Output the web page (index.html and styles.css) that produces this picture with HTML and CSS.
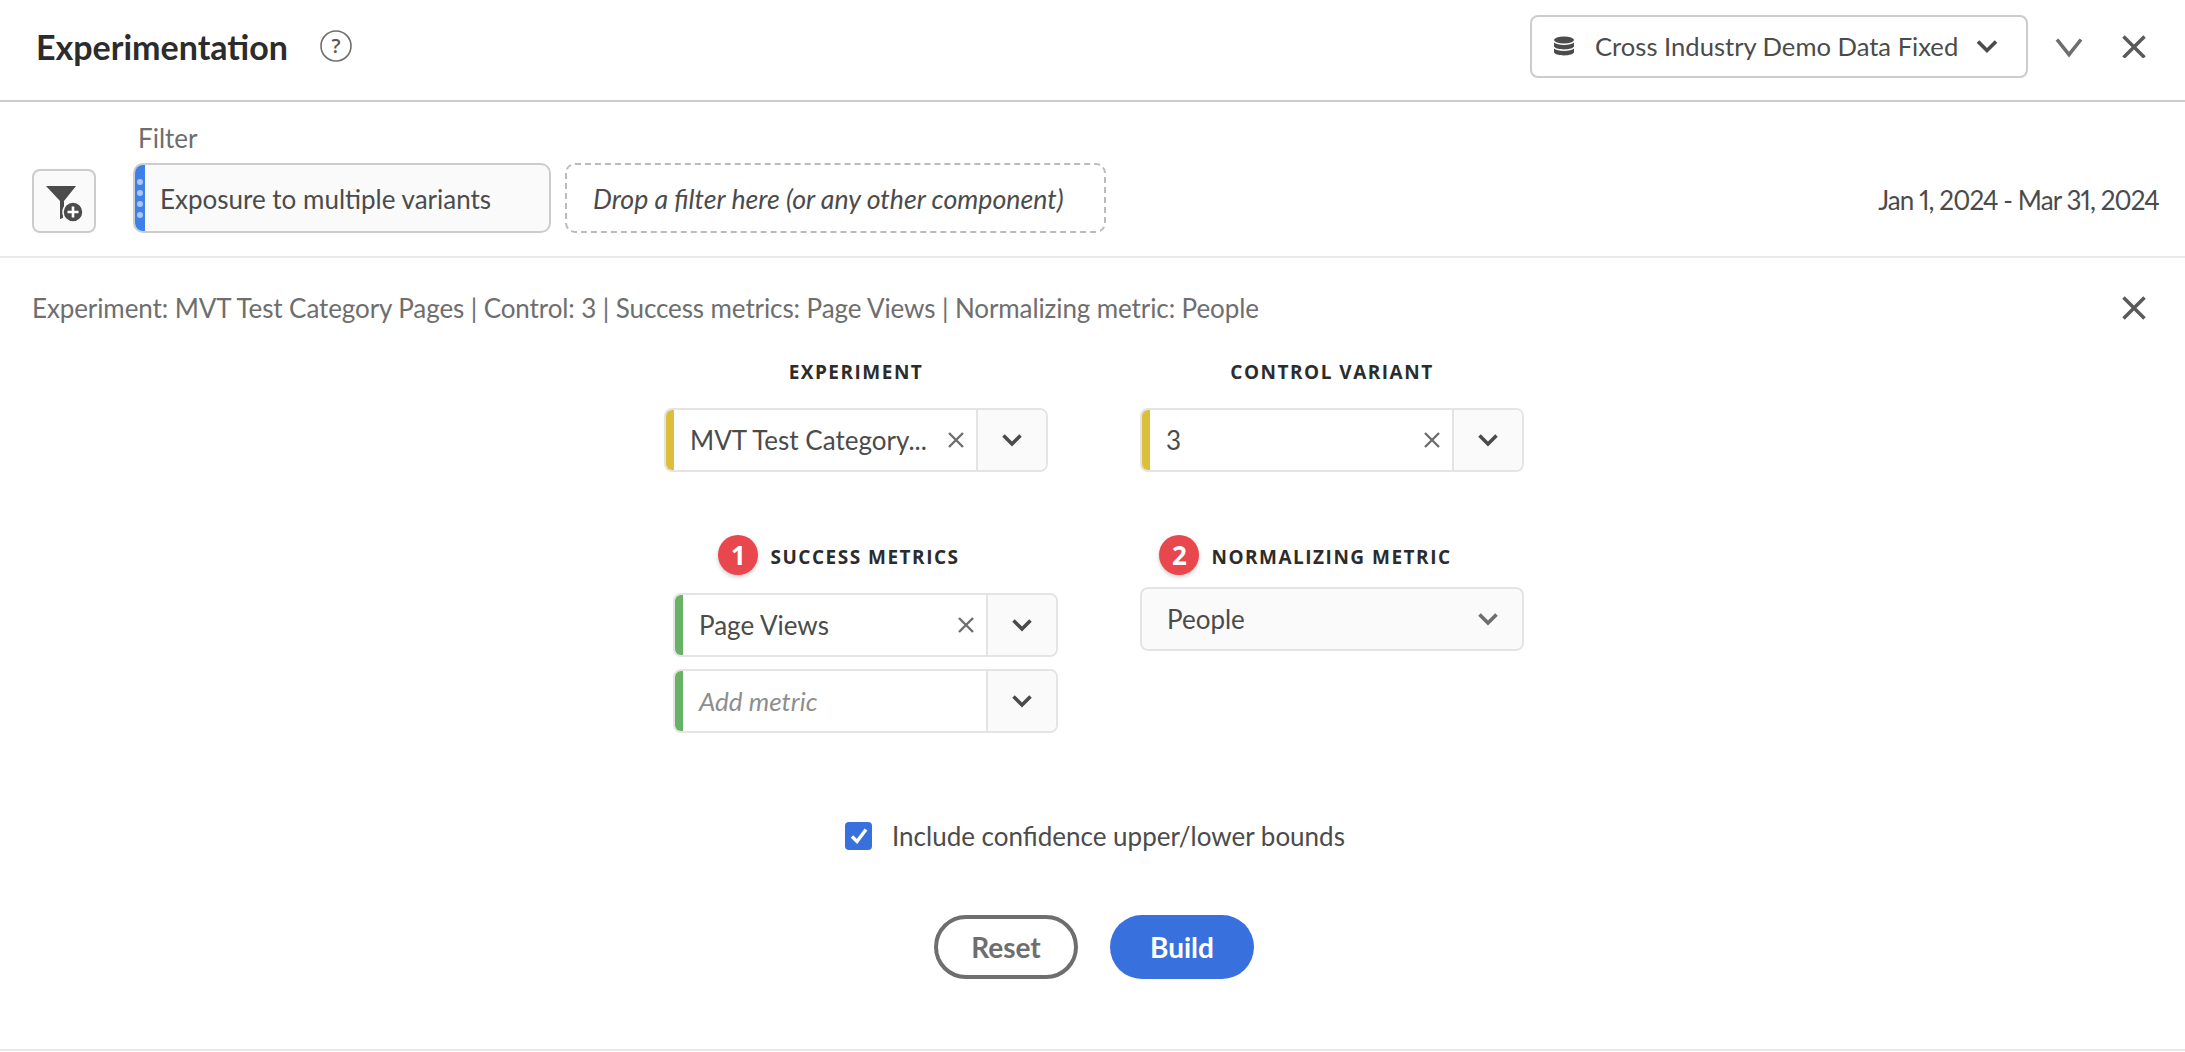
FILE: index.html
```html
<!DOCTYPE html>
<html lang="en">
<head>
    <meta charset="UTF-8">
    <title>Experimentation</title>
    <link rel="stylesheet" href="styles.css">
</head>
<body>
    <header class="panel-header">
        <h1 class="panel-title">Experimentation</h1>
        <svg class="help-icon" width="34" height="34" viewBox="0 0 34 34">
            <circle cx="17" cy="17" r="15" fill="none" stroke="#6e6e6e" stroke-width="1.6"/>
            <text x="17" y="24" text-anchor="middle" class="help-mark">?</text>
        </svg>
        <button class="data-view">
            <svg width="22" height="22" viewBox="0 0 22 22" fill="#4b4b4b">
                <ellipse cx="11" cy="5" rx="10" ry="3.500"/>
                <path d="M1 7.500c1.500 1.700 5.500 2.400 10 2.400s8.500-.7 10-2.400V11c0 2-4.600 3.400-10 3.400S1 13 1 11z"/>
                <path d="M1 13.500c1.500 1.700 5.500 2.400 10 2.400s8.500-.7 10-2.400V17c0 2-4.600 3.400-10 3.400S1 19 1 17z"/>
            </svg>
            <span class="data-view-name">Cross Industry Demo Data Fixed</span>
            <svg class="chevron" width="22" height="22" viewBox="0 0 22 22"><path d="M2 6.500l9 9 9-9"/></svg>
        </button>
        <svg class="chevron thin" width="28" height="28" viewBox="0 0 28 28"><path d="M2 7.500l12 15 12-15"/></svg>
        <svg class="close-icon" width="24" height="24" viewBox="0 0 24 24"><path d="M1.500 2.500l21 21M22.500 2.500l-21 21"/></svg>
    </header>

    <section class="filter-bar">
        <button class="filter-add">
            <svg width="38" height="38" viewBox="0 0 38 38">
                <path d="M0 0h30L18 15v11c-1 2-1 4-1 6l-3 1V15z" fill="#4b4b4b"/>
                <circle cx="27" cy="26" r="10" fill="#4b4b4b" stroke="#fafafa" stroke-width="1.500"/>
                <path d="M27 20.500v11M21.500 26h11" stroke="#fff" stroke-width="2.600"/>
            </svg>
        </button>
        <div class="filter-group">
            <div class="filter-label">Filter</div>
            <div class="filter-drops">
                <div class="filter-chip">
                    <span class="chip-grip"><i></i><i></i><i></i><i></i></span>
                    <span class="chip-name">Exposure to multiple variants</span>
                </div>
                <div class="filter-drop">Drop a filter here (or any other component)</div>
            </div>
        </div>
        <div class="date-range">Jan 1, 2024 - Mar 31, 2024</div>
    </section>

    <main class="builder">
        <div class="summary">
            <span>Experiment: MVT Test Category Pages | Control: 3 | Success metrics: Page Views | Normalizing metric: People</span>
            <svg class="close-icon" width="24" height="24" viewBox="0 0 24 24"><path d="M1.500 1.500l21 21M22.500 1.500l-21 21"/></svg>
        </div>

        <div class="form-row first">
            <div class="form-col">
                <div class="col-label">EXPERIMENT</div>
                <div class="picker">
                    <span class="stripe yellow"></span>
                    <span class="picker-value">MVT Test Category...</span>
                    <svg class="clear" width="16" height="16" viewBox="0 0 16 16"><path d="M1 1l14 14M15 1L1 15"/></svg>
                    <span class="picker-toggle"><svg class="chevron" width="20" height="20" viewBox="0 0 20 20"><path d="M1.500 5.500l8.500 8.500 8.500-8.500"/></svg></span>
                </div>
            </div>
            <div class="form-col">
                <div class="col-label">CONTROL VARIANT</div>
                <div class="picker">
                    <span class="stripe yellow"></span>
                    <span class="picker-value">3</span>
                    <svg class="clear" width="16" height="16" viewBox="0 0 16 16"><path d="M1 1l14 14M15 1L1 15"/></svg>
                    <span class="picker-toggle"><svg class="chevron" width="20" height="20" viewBox="0 0 20 20"><path d="M1.500 5.500l8.500 8.500 8.500-8.500"/></svg></span>
                </div>
            </div>
        </div>

        <div class="form-row second">
            <div class="form-col metrics">
                <div class="col-label badged"><span class="badge">1</span>SUCCESS METRICS</div>
                <div class="picker">
                    <span class="stripe green"></span>
                    <span class="picker-value">Page Views</span>
                    <svg class="clear" width="16" height="16" viewBox="0 0 16 16"><path d="M1 1l14 14M15 1L1 15"/></svg>
                    <span class="picker-toggle"><svg class="chevron" width="20" height="20" viewBox="0 0 20 20"><path d="M1.500 5.500l8.500 8.500 8.500-8.500"/></svg></span>
                </div>
                <div class="picker">
                    <span class="stripe green"></span>
                    <span class="picker-value placeholder">Add metric</span>
                    <span class="picker-toggle"><svg class="chevron" width="20" height="20" viewBox="0 0 20 20"><path d="M1.500 5.500l8.500 8.500 8.500-8.500"/></svg></span>
                </div>
            </div>
            <div class="form-col">
                <div class="col-label badged tight"><span class="badge">2</span>NORMALIZING METRIC</div>
                <div class="select">
                    <span>People</span>
                    <svg class="chevron light" width="20" height="20" viewBox="0 0 20 20"><path d="M1.500 5.500l8.500 8.500 8.500-8.500"/></svg>
                </div>
            </div>
        </div>

        <label class="bounds">
            <span class="checkbox"><svg width="18" height="18" viewBox="0 0 18 18"><path d="M2 9.500l5 5 9-12"/></svg></span>
            <span>Include confidence upper/lower bounds</span>
        </label>

        <div class="actions">
            <button class="btn btn-reset">Reset</button>
            <button class="btn btn-build">Build</button>
        </div>
    </main>
</body>
</html>
```

FILE: styles.css
```css
* {
    box-sizing: border-box;
}
html, body {
    height: 100%;
}
body {
    margin: 0;
    background-color: #fff;
    color: #4b4b4b;
    font-family: Lato, "Noto Sans", sans-serif;
    font-size: 26px;
    overflow: hidden;
}
svg {
    display: block;
    flex: none;
}
button {
    font-family: inherit;
    cursor: pointer;
}

/* header */
.panel-header {
    height: 102px;
    display: flex;
    align-items: center;
    padding: 0 39px 8px 36px;
    border-bottom: 2px solid #ccc;
}
.panel-title {
    margin: 0;
    font-size: 34px;
    font-weight: 700;
    color: #2c2c2c;
}
.help-icon {
    margin-left: 31px;
}
.help-mark {
    font-family: "Open Sans", sans-serif;
    font-size: 20px;
    font-weight: 600;
    fill: #5a5a5a;
}
.data-view {
    margin-left: auto;
    width: 498px;
    height: 63px;
    display: flex;
    align-items: center;
    padding: 0 28px 0 21px;
    background: #fff;
    border: 2px solid #ccc;
    border-radius: 8px;
    color: #4b4b4b;
    font-size: 25.600px;
}
.data-view-name {
    margin-left: 20px;
    margin-right: auto;
    white-space: nowrap;
}
.chevron path {
    fill: none;
    stroke: #4b4b4b;
    stroke-width: 3.600;
}
.chevron.light path {
    stroke: #6e6e6e;
}
.chevron.thin {
    margin-left: 27px;
}
.chevron.thin path {
    stroke: #6e6e6e;
}
.close-icon path {
    fill: none;
    stroke: #5a5a5a;
    stroke-width: 3.500;
}
.panel-header .close-icon {
    margin-left: 39px;
}

/* filter bar */
.filter-bar {
    height: 156px;
    display: flex;
    align-items: flex-end;
    padding: 0 26px 23px 32px;
    border-bottom: 2px solid #eaeaea;
}
.filter-add {
    width: 64px;
    height: 64px;
    padding: 8px 0 0 12px;
    background: #fafafa;
    border: 2px solid #ccc;
    border-radius: 8px;
}
.filter-group {
    margin-left: 37px;
}
.filter-label {
    margin-left: 5px;
    margin-bottom: 10px;
    font-size: 26px;
    line-height: 30px;
    color: #6e6e6e;
}
.filter-drops {
    display: flex;
    gap: 14px;
}
.filter-chip {
    width: 418px;
    height: 70px;
    display: flex;
    align-items: center;
    gap: 15px;
    background: #fafafa;
    border: 2px solid #ccc;
    border-radius: 10px;
    overflow: hidden;
}
.chip-name {
    padding-top: 2px;
}
.chip-grip {
    width: 10px;
    height: 100%;
    display: flex;
    flex-direction: column;
    justify-content: center;
    align-items: center;
    gap: 5px;
    background: #3f80e8;
}
.chip-grip i {
    width: 6px;
    height: 6px;
    border-radius: 50%;
    background: #a9c6f5;
}
.filter-drop {
    width: 541px;
    height: 70px;
    display: flex;
    align-items: center;
    padding: 2px 0 0 26px;
    border: 2px dashed #bbb;
    border-radius: 10px;
    font-size: 26.700px;
    font-style: italic;
}
.date-range {
    margin-left: auto;
    margin-bottom: 17px;
    white-space: nowrap;
    font-size: 26px;
    letter-spacing: -0.900px;
    font-variant-numeric: proportional-nums;
}

/* builder form */
.builder {
    height: 793px;
    border-bottom: 2px solid #eaeaea;
}
.summary {
    display: flex;
    justify-content: space-between;
    align-items: center;
    padding: 36px 39px 0 32px;
    height: 64px;
    color: #6e6e6e;
    font-size: 26px;
    letter-spacing: -0.100px;
}
.form-row {
    display: flex;
    padding-left: 664px;
}
.form-row.first {
    gap: 92px;
    margin-top: 35px;
}
.form-row.second {
    gap: 82px;
    margin-top: 46px;
}
.form-col {
    width: 384px;
}
.form-col.metrics {
    width: 385px;
    margin-left: 9px;
}
.col-label {
    height: 30px;
    margin-bottom: 21px;
    display: flex;
    justify-content: center;
    align-items: center;
    font-family: "Open Sans", sans-serif;
    font-size: 19px;
    font-weight: 700;
    letter-spacing: 1.500px;
    color: #2c2c2c;
}
.col-label.badged {
    height: 44px;
    margin-bottom: 19px;
    padding-top: 10px;
    padding-right: 53px;
}
.col-label.tight {
    margin-bottom: 13px;
}
.badge {
    width: 40px;
    height: 40px;
    margin-top: -4px;
    margin-right: 12px;
    display: flex;
    justify-content: center;
    align-items: center;
    border-radius: 50%;
    background: #e8474d;
    box-shadow: 0 2px 4px rgba(0, 0, 0, 0.2);
    color: #fff;
    font-size: 26px;
    font-weight: 700;
    letter-spacing: 0;
}
.picker {
    height: 64px;
    display: flex;
    align-items: center;
    margin-bottom: 12px;
    background: #fff;
    border: 2px solid #e4e4e4;
    border-radius: 8px;
    overflow: hidden;
}
.stripe {
    width: 10px;
    height: 64px;
    margin-left: -2px;
    flex: none;
}
.stripe.yellow {
    background: #dcc03c;
}
.stripe.green {
    background: #67b265;
}
.picker-value {
    flex: 1;
    min-width: 0;
    padding-left: 16px;
    white-space: nowrap;
}
.placeholder {
    font-style: italic;
    color: #8e8e8e;
}
.clear {
    margin: 0 12px 0 14px;
}
.clear path {
    fill: none;
    stroke: #6e6e6e;
    stroke-width: 2.400;
}
.picker-toggle {
    width: 70px;
    height: 100%;
    flex: none;
    display: flex;
    justify-content: center;
    align-items: center;
    background: #fafafa;
    border-left: 2px solid #e4e4e4;
}
.select {
    height: 64px;
    display: flex;
    align-items: center;
    justify-content: space-between;
    padding: 0 24px 0 25px;
    background: #fafafa;
    border: 2px solid #e4e4e4;
    border-radius: 8px;
}
.bounds {
    display: flex;
    align-items: center;
    justify-content: center;
    gap: 20px;
    margin-top: 75px;
    padding-left: 5px;
}
.checkbox {
    width: 27px;
    height: 28px;
    display: flex;
    justify-content: center;
    align-items: center;
    background: #3871de;
    border-radius: 4px;
}
.checkbox path {
    fill: none;
    stroke: #fff;
    stroke-width: 3.400;
}
.actions {
    display: flex;
    justify-content: center;
    gap: 32px;
    margin-top: 63px;
    padding-left: 3px;
}
.btn {
    width: 144px;
    height: 64px;
    border-radius: 32px;
    font-size: 28px;
    font-weight: 700;
}
.btn-reset {
    background: #fff;
    border: 4px solid #6e6e6e;
    color: #6e6e6e;
}
.btn-build {
    background: #3871de;
    border: none;
    color: #fff;
}
```
